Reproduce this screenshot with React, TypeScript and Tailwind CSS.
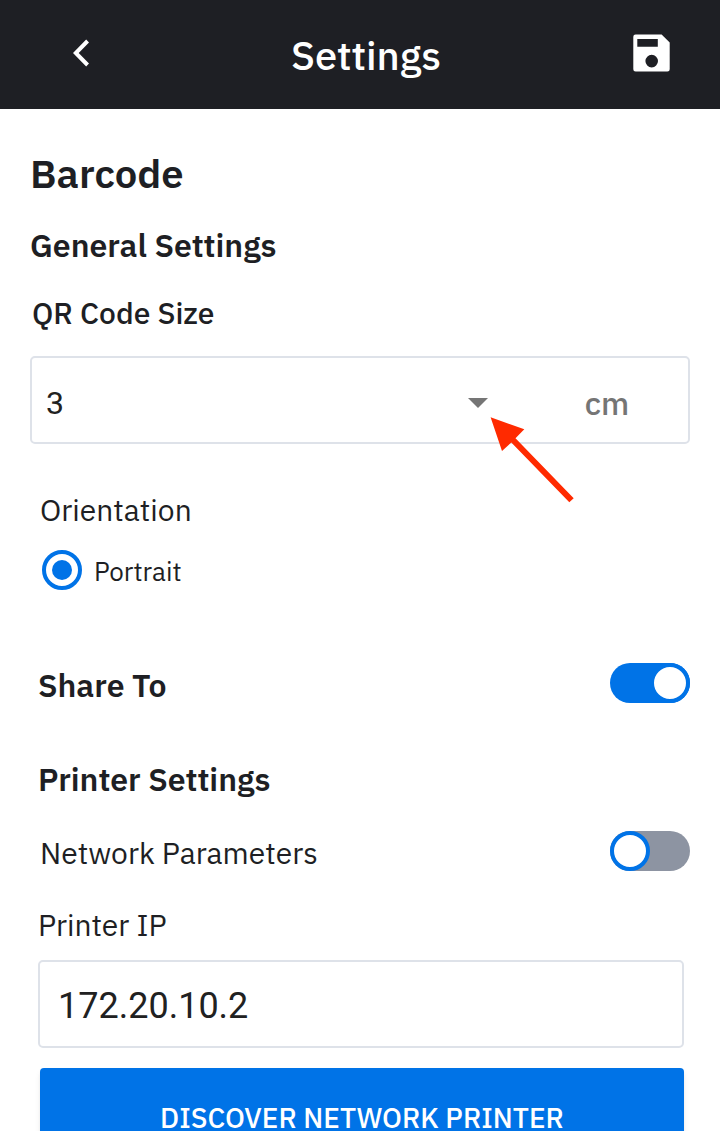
import { useState } from 'react';

type ToggleProps = {
  id: string;
  checked: boolean;
  onChange: (value: boolean) => void;
};

function Toggle({ id, checked, onChange }: ToggleProps) {
  return (
    <span className="grid h-10 w-20 shrink-0">
      <input
        id={id}
        type="checkbox"
        role="switch"
        checked={checked}
        onChange={(e) => onChange(e.target.checked)}
        className="peer col-start-1 row-start-1 h-10 w-20 cursor-pointer appearance-none rounded-full bg-[#8d94a2] checked:bg-[#0073e7]"
      />
      <span className="pointer-events-none col-start-1 row-start-1 size-10 justify-self-start rounded-full border-4 border-[#0073e7] bg-white peer-checked:justify-self-end" />
    </span>
  );
}

function Header() {
  return (
    <header className="flex h-[109px] shrink-0 items-center bg-[#1e1f24] pr-[38px] pl-[50px] text-white">
      <button type="button" aria-label="Back" className="grid h-16 w-[62px] place-items-center pb-1">
        <svg viewBox="0 0 16 28" className="h-7 w-4" fill="none" stroke="currentColor" strokeWidth="4">
          <path d="M14.6 2 2.8 14l11.8 12" />
        </svg>
      </button>
      <h1 className="flex-1 text-center text-[40px] leading-12 font-medium">Settings</h1>
      <button type="button" aria-label="Save" className="grid h-16 w-[62px] place-items-center pb-1">
        <svg viewBox="0 0 37 38" className="h-[38px] w-[37px]" fill="currentColor">
          <path
            fillRule="evenodd"
            d="M2.6.5H28.6L36.7 8.600V35.200a2.300 2.300 0 0 1-2.300 2.300H2.600A2.300 2.300 0 0 1 .3 35.200V2.800A2.300 2.300 0 0 1 2.600.5ZM4.300 5V12.800H24.800V5ZM18.700 20.800a6.300 6.300 0 1 0 0 12.600a6.300 6.300 0 0 0 0-12.600Z"
          />
        </svg>
      </button>
    </header>
  );
}

function PointerArrow() {
  return (
    <svg
      aria-hidden="true"
      viewBox="0 0 84 86"
      className="pointer-events-none absolute top-[61px] right-[116px] h-[86px] w-[84px]"
      fill="#ff2a00"
    >
      <path d="M.6.3 34.300 12.300 25.500 21.300 83.700 81.300 79.300 85.300 21.300 25.600 12 34Z" />
    </svg>
  );
}

export default function App() {
  const [size, setSize] = useState('3');
  const [share, setShare] = useState(true);
  const [network, setNetwork] = useState(false);
  const [ip, setIp] = useState('172.20.10.2');

  return (
    <div className="flex h-screen flex-col overflow-hidden bg-white font-['IBM_Plex_Sans','Noto_Sans',sans-serif] text-[#1e1f24]">
      <Header />
      <main className="flex-1 overflow-y-auto px-[30px] pt-10 [scrollbar-width:none]">
        <h2 className="text-[40px] leading-12 font-semibold">Barcode</h2>
        <h3 className="mt-7 text-[32px] leading-10 font-semibold">General Settings</h3>
        <label htmlFor="qr-size" className="mt-[30px] block pl-[2px] text-[30px] leading-9 font-medium">
          QR Code Size
        </label>

        <div className="relative mt-[25px]">
          <div className="flex h-[88px] items-center rounded-[5px] border-2 border-[#dee2e9]">
            <div className="grid h-full flex-1 items-center">
              <select
                id="qr-size"
                value={size}
                onChange={(e) => setSize(e.target.value)}
                className="col-start-1 row-start-1 h-full w-full appearance-none bg-transparent pt-[6px] pl-[14px] font-[Roboto,sans-serif] text-[32px] text-[#212121] outline-none"
              >
                <option>3</option>
                <option>4</option>
                <option>5</option>
              </select>
              <svg
                aria-hidden="true"
                viewBox="0 0 20 10"
                className="pointer-events-none col-start-1 row-start-1 mt-[6px] mr-[38px] h-[10px] w-5 justify-self-end"
                fill="#757575"
              >
                <path d="M0 0H20L10 10Z" />
              </svg>
            </div>
            <span className="w-[162px] pt-[6px] text-center text-[32px] leading-9 font-medium text-[#757575]">cm</span>
          </div>
          <PointerArrow />
        </div>

        <fieldset className="mt-12 pl-[10px]">
          <legend className="text-[30px] leading-9">Orientation</legend>
          <label className="mt-[22px] flex items-center gap-3 pl-[2px] text-[26px] leading-9">
            <input
              type="radio"
              name="orientation"
              defaultChecked
              className="grid size-10 appearance-none place-items-center rounded-full border-4 border-[#0073e7] before:size-5 before:rounded-full checked:before:bg-[#0073e7]"
            />
            <span className="pt-[2px]">Portrait</span>
          </label>
        </fieldset>

        <div className="mt-[73px] flex items-center justify-between pl-2">
          <label htmlFor="share" className="pt-1 text-[32px] leading-9 font-semibold">
            Share To
          </label>
          <Toggle id="share" checked={share} onChange={setShare} />
        </div>

        <h3 className="mt-14 pl-2 text-[32px] leading-10 font-semibold">Printer Settings</h3>

        <div className="mt-8 flex items-center justify-between pl-[10px]">
          <label htmlFor="network" className="pt-1 text-[30px] leading-9">
            Network Parameters
          </label>
          <Toggle id="network" checked={network} onChange={setNetwork} />
        </div>

        <div className="mt-9 pr-[6px] pl-2">
          <label htmlFor="ip" className="block text-[30px] leading-9">
            Printer IP
          </label>
          <input
            id="ip"
            type="text"
            value={ip}
            onChange={(e) => setIp(e.target.value)}
            className="mt-[17px] block h-[88px] w-full rounded-[5px] border-2 border-[#dee2e9] px-[18px] pt-1 font-[Roboto,sans-serif] text-[36px] text-[#212121] outline-none"
          />
          <div className="pt-5 pb-8 pl-[2px]">
            <button
              type="button"
              className="block h-[100px] w-full rounded-[4px] bg-[#0073e7] text-[28px] leading-6 font-medium text-white uppercase shadow-md"
            >
              Discover Network Printer
            </button>
          </div>
        </div>
      </main>
    </div>
  );
}
